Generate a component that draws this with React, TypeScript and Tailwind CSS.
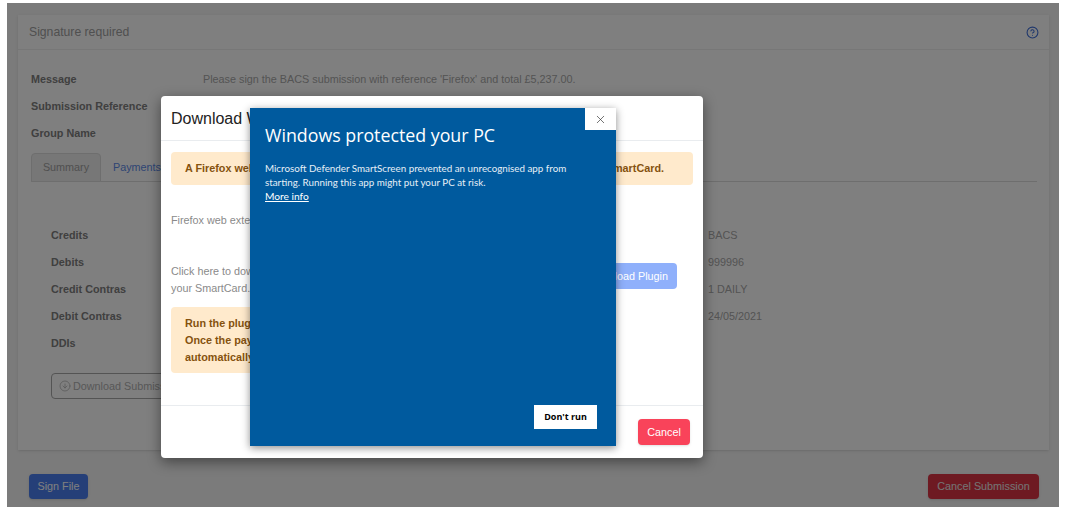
import { CircleHelp, CircleArrowDown, X } from 'lucide-react';

const infoRows = [
  { label: 'Message', value: "Please sign the BACS submission with reference 'Firefox' and total £5,237.00." },
  { label: 'Submission Reference', value: 'Firefox' },
  { label: 'Group Name', value: '1 DAILY' },
];

const summaryRows = [
  { label: 'Credits', side: 'Submission Type', value: 'BACS' },
  { label: 'Debits', side: 'Service User Number', value: '999996' },
  { label: 'Credit Contras', side: 'Group', value: '1 DAILY' },
  { label: 'Debit Contras', side: 'Processing Date', value: '24/05/2021' },
  { label: 'DDIs', side: '', value: '' },
];

function SmartScreen() {
  return (
    <div className="absolute left-[89px] top-[12px] flex h-[338px] w-[366px] flex-col bg-[#005a9e] shadow-[0_2px_8px_rgba(0,0,0,0.45)] font-['Open_Sans',sans-serif]">
      <div className="flex justify-end">
        <button className="flex h-[22px] w-[31px] items-center justify-center bg-white text-[#333]">
          <X size={13} strokeWidth={1.25} />
        </button>
      </div>
      <div className="pl-[15px] pr-4 text-white">
        <h2 className="mt-[-7px] text-[17.8px] leading-[24px] font-normal">Windows protected your PC</h2>
        <p className="mt-[14px] font-['Lato',sans-serif] text-[9.8px] leading-[14px] text-[#e6eff6]">
          Microsoft Defender SmartScreen prevented an unrecognised app from
          <br />
          starting. Running this app might put your PC at risk.
        </p>
        <a className="block font-['Lato',sans-serif] text-[10.2px] leading-[14px] underline">More info</a>
      </div>
      <div className="mt-auto flex justify-end pb-[17px] pr-[19px]">
        <button className="h-[24px] w-[63px] bg-white text-[9px] font-bold text-black">Don't run</button>
      </div>
    </div>
  );
}

function DownloadModal() {
  return (
    <div className="absolute left-[154px] top-[93px] flex h-[362px] w-[542px] flex-col rounded bg-white shadow-[0_4px_14px_rgba(0,0,0,0.45)]">
      <div className="flex h-[45px] items-center border-b border-[#e9ecef] px-[10px] pt-[1px] text-[16px] text-[#222]">
        Download Web Extension
      </div>
      <div className="flex-1 px-[10px] pt-[11px] text-[10.8px] text-[#8a8a8a]">
        <div className="flex h-[33px] items-center rounded-sm bg-[#ffeacc] pl-[14px] font-bold text-[#85520f]">
          A Firefox web extension is required in order to communicate correctly using your SmartCard.
        </div>
        <p className="mt-[27px] leading-[17px]">Firefox web extension has been installed.</p>
        <div className="mt-[34px] flex items-center justify-between pr-[16px]">
          <p className="leading-[17px]">
            Click here to download the plugin used to communicate with
            <br />
            your SmartCard.
          </p>
          <button className="mb-[8px] flex h-[26px] items-center rounded-sm bg-[#8fb0fb] px-[9px] text-white">Download Plugin</button>
        </div>
        <div className="mt-[10px] h-[66px] w-[440px] rounded-sm bg-[#ffeacc] pb-[8px] pl-[14px] pt-[8px] font-bold leading-[17px] text-[#85520f]">
          Run the plugin installer.
          <br />
          Once the payload has been installed
          <br />
          automatically continue.
        </div>
      </div>
      <div className="flex h-[53px] items-start justify-end border-t border-[#e9ecef] pr-[13px] pt-[13px]">
        <button className="h-[26px] w-[52px] rounded-sm bg-[#f9435a] text-[10.8px] text-white shadow-sm">Cancel</button>
      </div>
      <SmartScreen />
    </div>
  );
}

export default function App() {
  return (
    <div className="h-[507px] w-[1067px] overflow-hidden bg-white pb-0 pl-[7px] pr-[8px] pt-[3px] font-['Liberation_Sans',Arial,sans-serif]">
      <div className="relative h-[504px] bg-[#f6f6f6] pl-[11px] pr-[10px] pt-[12px] text-[10.8px] text-[#808080]">
        <div className="h-[435px] bg-white shadow-sm">
          <div className="flex h-[35px] items-center justify-between border-b border-[#eee] pl-[11px] pr-[10px] pt-[1px] text-[12.2px] text-[#a0a0a0]">
            <span>Signature required</span>
            <CircleHelp size={13} strokeWidth={2} className="text-[#3f6fd8]" />
          </div>
          <div className="px-[13px] pt-[16px]">
            {infoRows.map((row) => (
              <div key={row.label} className="flex h-[27px] items-center">
                <span className="w-[172px] font-bold">{row.label}</span>
                <span className="text-[#a8a8a8]">{row.value}</span>
              </div>
            ))}
            <div className="mr-[-1px] mt-[6px] flex h-[29px] border-b border-[#ddd]">
              <div className="flex h-[29px] w-[70px] items-center justify-center rounded-t-sm border border-[#ddd] bg-[#eee] text-[#a0a0a0]">
                Summary
              </div>
              <div className="flex items-center pl-3 text-[#5c8ae8]">Payments</div>
            </div>
            <div className="pl-5 pt-[40px]">
              {summaryRows.map((row) => (
                <div key={row.label} className="flex h-[27px] items-center">
                  <span className="w-[400px] font-bold">{row.label}</span>
                  <span className="w-[257px] font-bold">{row.side}</span>
                  <span className="text-[#a8a8a8]">{row.value}</span>
                </div>
              ))}
              <button className="mt-[16px] flex h-[26px] w-[170px] items-center gap-[2px] rounded-sm border border-[#a8a8a8] pl-[7px] text-[#b0b0b0]">
                <CircleArrowDown size={12} strokeWidth={1.5} />
                Download Submission
              </button>
            </div>
          </div>
        </div>
        <div className="mt-[24px] flex justify-between pl-[11px] pr-[10px]">
          <button className="flex h-[25px] w-[59px] items-center justify-center rounded-sm bg-[#4a7ef0] text-white shadow-sm">
            Sign File
          </button>
          <button className="flex h-[25px] w-[111px] items-center justify-center rounded-sm bg-[#dc3545] text-[#e8e8e8] shadow-sm">
            Cancel Submission
          </button>
        </div>
        <div className="absolute inset-0 bg-black/50" />
        <DownloadModal />
      </div>
    </div>
  );
}
